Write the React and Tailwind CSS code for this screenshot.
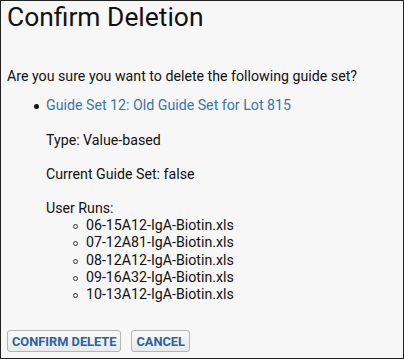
export default function App() {
  const runs = [
    '06-15A12-IgA-Biotin.xls',
    '07-12A81-IgA-Biotin.xls',
    '08-12A12-IgA-Biotin.xls',
    '09-16A32-IgA-Biotin.xls',
    '10-13A12-IgA-Biotin.xls',
  ]

  return (
    <div className="h-[359px] w-[404px] overflow-hidden border border-[#222] bg-[#f7f7f7] font-['Roboto',sans-serif] text-[#111]">
      <div className="px-[6px] pt-[1px]">
        <h1 className="text-[26.4px] leading-[30px] font-normal">Confirm Deletion</h1>

        <p className="mt-[36px] text-[14.2px] leading-[17px]">Are you sure you want to delete the following guide set?</p>

        <ul className="mt-[12px] pl-[39px] text-[14.2px] leading-[17px]">
          <li className="relative">
            <span className="absolute left-[-12px] top-[7px] h-[5px] w-[5px] rounded-full bg-[#111]" />
            <a className="text-[#3a74ad]">Guide Set 12: Old Guide Set for Lot 815</a>
            <p className="mt-[18px]">Type: Value-based</p>
            <p className="mt-[17px]">Current Guide Set: false</p>
            <p className="mt-[17px]">User Runs:</p>
            <ul className="pl-[40px]">
              {runs.map((run) => (
                <li key={run} className="relative leading-[17.3px]">
                  <span className="absolute left-[-13px] top-[7px] h-[5px] w-[5px] rounded-full border border-[#333]" />
                  {run}
                </li>
              ))}
            </ul>
          </li>
        </ul>

        <div className="mt-[27px] flex gap-[10px]">
          <button className="h-[22px] rounded-[3px] border border-[#b5b5b5] bg-gradient-to-b from-[#fafafa] to-[#e9e9e9] px-[4px] text-[12.8px] font-bold text-[#2a64a0] uppercase">
            Confirm Delete
          </button>
          <button className="h-[22px] rounded-[3px] border border-[#b5b5b5] bg-gradient-to-b from-[#fafafa] to-[#e9e9e9] px-[4px] text-[12.8px] font-bold text-[#2a64a0] uppercase">
            Cancel
          </button>
        </div>
      </div>
    </div>
  )
}
